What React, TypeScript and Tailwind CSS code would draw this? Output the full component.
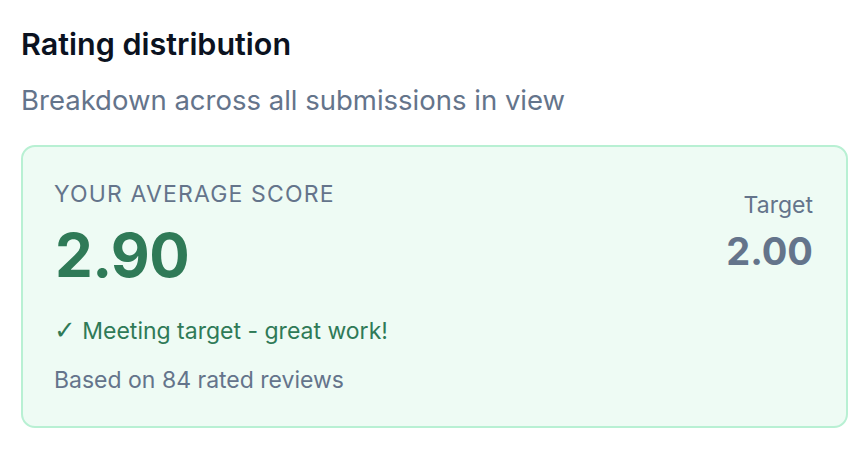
export default function App() {
  const average = 2.9;
  const target = 2.0;
  const reviews = 84;

  return (
    <div className="min-h-screen bg-white px-[21px] pt-[26px] font-['Inter','Noto_Sans',sans-serif]">
      <h2 className="text-[30.5px] font-semibold leading-[36px] text-[#0b1220]">
        Rating distribution
      </h2>
      <p className="mt-[21px] text-[27.5px] leading-[34px] text-[#64748b]">
        Breakdown across all submissions in view
      </p>

      {/* Score card */}
      <div className="mt-[28px] flex w-[827px] justify-between rounded-[14px] border-2 border-[#b8f0d3] bg-[#eefbf4] pl-[31px] pr-[33px] pt-[32px] pb-[31px]">
        <div>
          <div className="text-[23px] leading-[30px] tracking-[0.05em] text-[#64748b]">
            YOUR AVERAGE SCORE
          </div>
          <div className="mt-[16px] pl-[1px] text-[60px] font-bold leading-[60px] tracking-[-0.01em] text-[#2f7a57]">
            {average.toFixed(2)}
          </div>
          <div className="mt-[30px] text-[23px] leading-[30px] text-[#2f7a57]">
            <span className="font-['DejaVu_Sans',sans-serif] text-[26px] font-bold">✓</span> Meeting target - great work!
          </div>
          <div className="mt-[19px] text-[23px] leading-[30px] text-[#64748b]">
            Based on {reviews} rated reviews
          </div>
        </div>
        <div className="pt-[11px] text-right">
          <div className="text-[23px] leading-[30px] text-[#64748b]">Target</div>
          <div className="mt-[11px] text-[38px] font-bold leading-[40px] text-[#64748b]">
            {target.toFixed(2)}
          </div>
        </div>
      </div>
    </div>
  );
}
